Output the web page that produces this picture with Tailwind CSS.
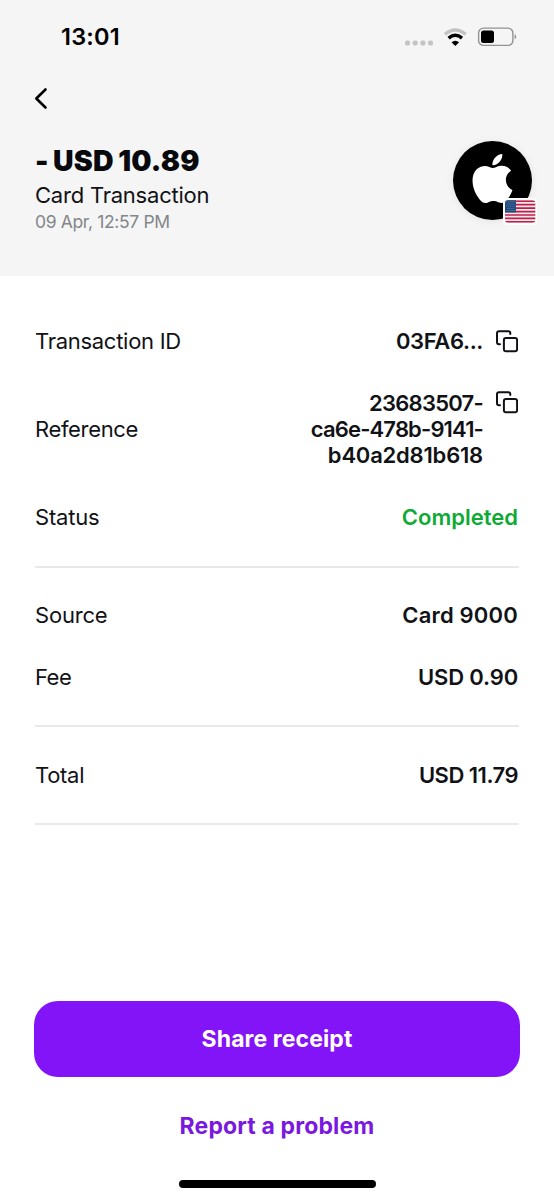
<!DOCTYPE html>
<html lang="en">
<head>
<meta charset="utf-8">
<title>Card Transaction</title>
<script src="https://cdn.jsdelivr.net/npm/@tailwindcss/browser@4"></script>
</head>
<body class="bg-white">
<main class="flex h-[1199px] w-[554px] flex-col overflow-hidden bg-white font-['Inter',sans-serif] text-[22px] leading-[26px] text-[#111216]">
  <header class="h-[276px] shrink-0 bg-[#f5f5f5]">
    <div class="flex h-[74px] items-center justify-between pr-[37px] pl-[61px]">
      <span class="text-[23.5px] font-semibold tracking-[0.2px] text-black">13:01</span>
      <svg class="h-6 w-[114px]" viewBox="403 25 114 24" fill="none">
        <g fill="#c4c4c4"><rect x="405" y="40.500" width="5" height="5" rx="1.800"/><rect x="412.700" y="40.500" width="5" height="5" rx="1.800"/><rect x="420.400" y="40.500" width="5" height="5" rx="1.800"/><rect x="428" y="40.500" width="5" height="5" rx="1.800"/></g>
        <path d="M444.900 34.200Q455.300 25.600 465.700 34.200" stroke="#c2c2c2" stroke-width="3.400"/>
        <path d="M448.600 38.100Q455.300 32.500 462 38.100" stroke="#000" stroke-width="3.400"/>
        <path d="M451.500 42.300Q455.300 39.300 459.100 42.300L455.300 46Z" fill="#000"/>
        <rect x="478.600" y="28.100" width="34.300" height="17.300" rx="5" stroke="#929292" stroke-width="1.400"/>
        <rect x="481" y="30.500" width="13" height="12.500" rx="2.500" fill="#000"/>
        <path d="M514.700 34.300c2 .8 2 4 0 4.900z" fill="#8c8c8c"/>
      </svg>
    </div>
    <div class="flex h-[49px] items-center pl-[34px]">
      <svg class="h-6 w-4" viewBox="0 0 16 24" fill="none" stroke="#000" stroke-width="2.600" stroke-linecap="round" stroke-linejoin="round"><path d="M11.500 2.500 2.300 11.500 11.500 20.500"/></svg>
    </div>
    <div class="flex justify-between pt-[18px] pr-[22px] pl-[35px]">
      <div class="flex flex-col whitespace-nowrap pt-[2px]">
        <h1 class="text-[28.5px] leading-9 font-black tracking-[0.2px] text-[#08090c] [word-spacing:-1.500px]">- USD 10.89</h1>
        <p class="mt-[2px] leading-[28px] tracking-[-0.22px]">Card Transaction</p>
        <p class="text-[17.5px] leading-[26px] tracking-[-0.35px] text-[#83868a]">09 Apr, 12:57 PM</p>
      </div>
      <div class="relative flex size-[79px] items-center justify-center rounded-full bg-black shadow-[0_1px_8px_rgba(0,0,0,0.08)]">
        <svg class="mb-[5px] size-[49px]" viewBox="0 0 24 24" fill="#fff"><path d="M12.152 6.896c-.948 0-2.415-1.078-3.960-1.040-2.040.027-3.910 1.183-4.961 3.014-2.117 3.675-.546 9.103 1.519 12.090 1.013 1.454 2.208 3.090 3.792 3.039 1.520-.065 2.090-.987 3.935-.987 1.831 0 2.350.987 3.960.948 1.637-.026 2.676-1.480 3.676-2.948 1.156-1.688 1.636-3.325 1.662-3.415-.039-.013-3.182-1.221-3.220-4.857-.026-3.040 2.480-4.494 2.597-4.559-1.429-2.090-3.623-2.324-4.390-2.376-2-.156-3.675 1.090-4.610 1.090zM15.530 3.830c.843-1.012 1.400-2.427 1.245-3.830-1.207.052-2.662.805-3.532 1.818-.780.896-1.454 2.338-1.273 3.714 1.338.104 2.715-.688 3.559-1.701"/></svg>
        <svg class="absolute top-[57px] left-[50px] h-[27px] w-[34px]" viewBox="0 0 34 27">
          <defs><clipPath id="flag"><rect x="2" y="2.300" width="30.300" height="22.500" rx="3"/></clipPath></defs>
          <rect width="34" height="27" rx="4.500" fill="#fff"/>
          <g clip-path="url(#flag)">
            <rect x="2" y="2" width="31" height="23" fill="#f4e9ed"/>
            <path d="M2 3.200h31M2 6.650h31M2 10.100h31M2 13.550h31M2 17h31M2 20.450h31M2 23.900h31" stroke="#bd2149" stroke-width="1.730"/>
            <rect x="2" y="2" width="11" height="12.400" fill="#1f4a7c"/>
            <path d="M3.500 3.800h9M4.500 6h8M3.500 8.200h9M4.500 10.400h8M3.500 12.500h9" stroke="#8ba6c5" stroke-width=".8" stroke-dasharray=".8 1.200"/>
          </g>
        </svg>
      </div>
    </div>
  </header>
  <section class="px-[35px] pt-[52px]">
    <div class="flex justify-between">
      <span class="tracking-[-0.28px]">Transaction ID</span>
      <div class="flex gap-[13px] font-semibold"><span class="tracking-[-0.35px]">03FA6...</span>
        <svg class="mt-px mr-px h-6 w-[22px]" viewBox="0 0 22 24" fill="none" stroke="#111216" stroke-width="2" stroke-linecap="round"><path d="M14.300 5V4.200q0-2-2-2H3q-2 0-2 2v9q0 2 2 2h1"/><rect x="7.900" y="9" width="13.200" height="13.200" rx="2"/></svg>
      </div>
    </div>
    <div class="mt-[36px] flex items-center justify-between">
      <span class="tracking-[-0.35px]">Reference</span>
      <div class="flex gap-[13px] text-right font-semibold">
        <div><span class="tracking-[-0.75px]">23683507-</span><br><span class="tracking-[-0.85px]">ca6e-478b-9141-</span><br><span class="tracking-[-0.2px]">b40a2d81b618</span></div>
        <svg class="mr-px h-6 w-[22px]" viewBox="0 0 22 24" fill="none" stroke="#111216" stroke-width="2" stroke-linecap="round"><path d="M14.300 5V4.200q0-2-2-2H3q-2 0-2 2v9q0 2 2 2h1"/><rect x="7.900" y="9" width="13.200" height="13.200" rx="2"/></svg>
      </div>
    </div>
    <div class="mt-[36px] flex justify-between pr-px"><span class="tracking-[-0.2px]">Status</span><span class="font-semibold text-[#0faa35]">Completed</span></div>
    <hr class="mt-[36px] border-t-2 border-[#e9e9ea]">
    <div class="mt-[34px] flex justify-between pr-px"><span class="tracking-[-0.2px]">Source</span><span class="font-semibold tracking-[0.2px]">Card 9000</span></div>
    <div class="mt-[36px] flex justify-between pr-px"><span class="tracking-[-0.5px]">Fee</span><span class="font-semibold tracking-[-0.15px]">USD 0.90</span></div>
    <hr class="mt-[35px] border-t-2 border-[#e9e9ea]">
    <div class="mt-[35px] flex justify-between pr-px"><span class="tracking-[-0.3px]">Total</span><span class="font-semibold tracking-[-0.5px]">USD 11.79</span></div>
    <hr class="mt-[35px] border-t-2 border-[#e9e9ea]">
  </section>
  <footer class="mt-auto flex flex-col items-center px-[34px] pb-[11.5px]">
    <button class="h-[76px] w-full rounded-[24px] bg-[#8414f8] text-[23px] font-bold tracking-[0.1px] text-white">Share receipt</button>
    <button class="mt-[36px] text-[23px] font-bold tracking-[0.15px] text-[#7a18e0]">Report a problem</button>
    <div class="mt-[41px] h-[7.500px] w-[197px] rounded-full bg-black"></div>
  </footer>
</main>
</body>
</html>
